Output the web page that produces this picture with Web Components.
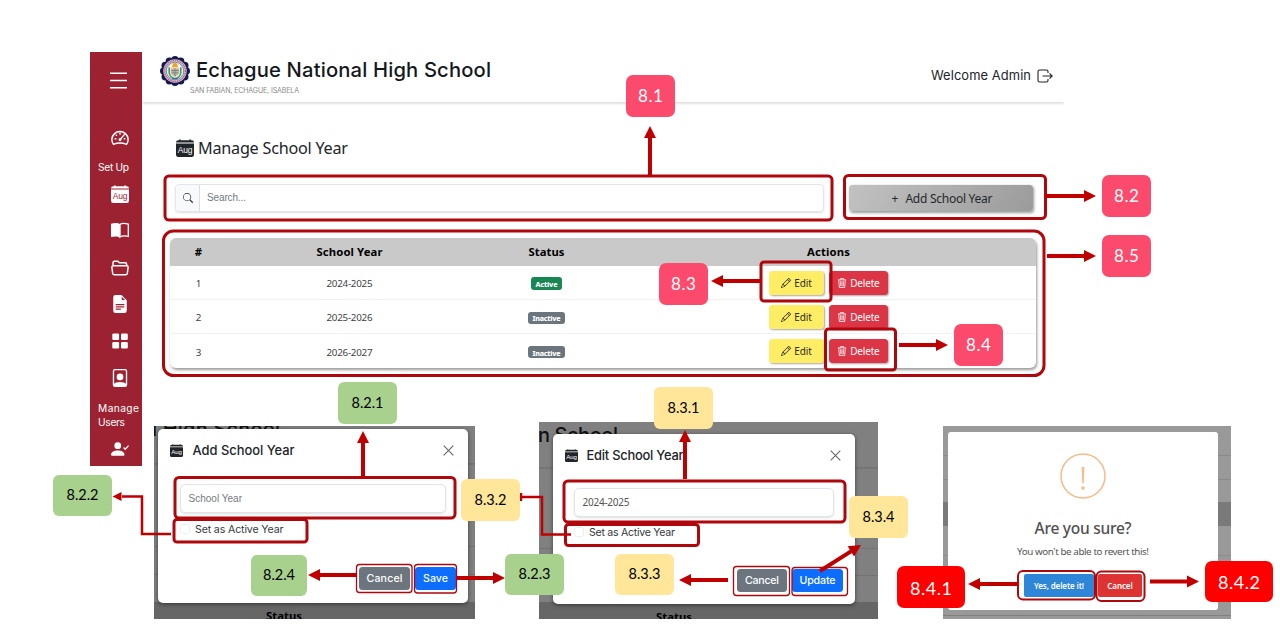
<!DOCTYPE html>
<html lang="en">
<head>
<meta charset="utf-8">
<title>Manage School Year</title>
<style>
html,body{margin:0;padding:0;background:#fff;overflow:hidden}
body{width:1280px;height:644px;font-family:"Noto Sans","Open Sans",sans-serif}
</style>
</head>
<body>
<guide-board></guide-board>
<script>
const make=(name,html,setup)=>customElements.define(name,class extends HTMLElement{
  connectedCallback(){
    if(this.shadowRoot)return;
    this.attachShadow({mode:'open'}).innerHTML=typeof html==='function'?html(this):html;
    if(setup)setup(this);
  }
});
const calendar='<path d="M3.5 0a.5.5 0 0 1 .5.5V1h8V.5a.5.5 0 0 1 1 0V1h1a2 2 0 0 1 2 2H0a2 2 0 0 1 2-2h1V.5a.5.5 0 0 1 .5-.5M0 4h16v10a2 2 0 0 1-2 2H2a2 2 0 0 1-2-2z"/>';
const icons={
 menu:'<path d="M0 1.2h16M0 8h16M0 14.8h16" fill="none" stroke="currentColor" stroke-width="1.5"/>',
 gauge:'<path d="M2.2 13.7A7.2 7.2 0 1 1 13.8 13.7Q8 11.3 2.2 13.7Z" fill="none" stroke="currentColor" stroke-width="1.3"/><path d="M8 3v2M3.2 8.7h1.6M11.3 8.7h1.5M4.2 5l1.1 1.1M12.2 4.6 8 9.5" fill="none" stroke="currentColor" stroke-width="1.2"/><circle cx="8" cy="9.6" r="1.3"/>',
 book:'<path d="M8 2.8C6.2 1.4 3 1.5 0 2.5v11.8c3-.9 6.2-.9 8 .4z"/><path d="M8 3c2-1.2 4.5-1 7.4-.2v10.8c-2.9-.6-5.4-.7-7.4.6z" fill="none" stroke="currentColor" stroke-width="1.2"/>',
 folder:'<path d="M1.8 6.2V3.3Q1.8 2 3.1 2h3l1.4 1.4h5.2q1.2 0 1.2 1.3v1.5M2 6h12q1.4 0 1.2 1.5l-.7 5.2Q14.3 14 13 14H3q-1.3 0-1.5-1.3L.8 7.5Q.7 6 2 6Z" fill="none" stroke="currentColor" stroke-width="1.3"/>',
 doc:'<path fill-rule="evenodd" d="M9.3 0H4a2 2 0 0 0-2 2v12a2 2 0 0 0 2 2h8a2 2 0 0 0 2-2V4.7L9.3 0M9.5 3.5v-2l3 3h-2a1 1 0 0 1-1-1M4.5 9a.5.5 0 0 1 0-1h7a.5.5 0 0 1 0 1zM4 10.5a.5.5 0 0 1 .5-.5h7a.5.5 0 0 1 0 1h-7a.5.5 0 0 1-.5-.5m.5 2.5a.5.5 0 0 1 0-1h4a.5.5 0 0 1 0 1z"/>',
 grid:'<rect x=".3" y=".5" width="6.8" height="6.4" rx="1.2"/><rect x="9" y=".5" width="6.8" height="6.4" rx="1.2"/><rect x=".3" y="9" width="6.8" height="6.4" rx="1.2"/><rect x="9" y="9" width="6.8" height="6.4" rx="1.2"/>',
 portrait:'<rect x="2.2" y=".6" width="11.6" height="14.8" rx="1.4" fill="none" stroke="currentColor" stroke-width="1.2"/><circle cx="8" cy="7" r="3"/><path d="M2.5 15v-1.6C4 11 12 11 13.500 13.400V15z"/>',
 usercheck:'<circle cx="6" cy="5" r="3"/><path d="M0 13.200C0 8 12 8 12 13.200Q12 14 11 14H1Q0 14 0 13.200"/><path d="m11.200 6.700 1.400 1.500L15.600 5" fill="none" stroke="currentColor" stroke-width="1.100"/>',
 search:'<path d="M11.742 10.344a6.500 6.500 0 1 0-1.397 1.398l3.850 3.850a1 1 0 0 0 1.415-1.414zM12 6.500a5.500 5.500 0 1 1-11 0 5.500 5.500 0 0 1 11 0"/>',
 exit:'<path d="M11 5V3.500Q11 2 9.500 2h-7Q1 2 1 3.500v9Q1 14 2.500 14h7Q11 14 11 12.500V11M5.500 8h9.700M12.500 5.300 15.200 8l-2.700 2.700" fill="none" stroke="currentColor" stroke-width="1.100"/>',
 pencil:'<path d="M12.146.146a.5.5 0 0 1 .708 0l3 3a.5.5 0 0 1 0 .708l-10 10a.5.5 0 0 1-.168.110l-5 2a.5.5 0 0 1-.650-.650l2-5a.5.5 0 0 1 .110-.168zM11.207 2.500 13.500 4.793 14.793 3.500 12.500 1.207zm1.586 3L10.500 3.207 4 9.707V10h.5a.5.5 0 0 1 .5.5v.5h.5a.5.5 0 0 1 .5.5v.5h.293zm-9.761 5.175-.106.106-1.528 3.821 3.821-1.528.106-.106A.5.5 0 0 1 5 12.500V12h-.5a.5.5 0 0 1-.5-.5V11h-.5a.5.5 0 0 1-.468-.325"/>',
 trash:'<path d="M1.500 3h13M5.500 2.800V1h5v1.800M2.800 3.200l.9 12h8.600l.9-12M5.700 5.200l.3 8M8 5.200v8M10.300 5.200l-.3 8" fill="none" stroke="currentColor" stroke-width="1.300"/>',
 close:'<path d="m1 1 14 14M15 1 1 15" fill="none" stroke="currentColor" stroke-width="1.600"/>',
};
const seal=()=>{let p='';for(let i=0;i<12;i++){const a=i*Math.PI/6;p+=`<circle cx="${(16+12*Math.cos(a)).toFixed(2)}" cy="${(16+12*Math.sin(a)).toFixed(2)}" r="4"/>`}
 return `<g fill="#15194f">${p}<circle cx="16" cy="16" r="13.600"/></g><circle cx="16" cy="16" r="12.500" fill="#d5c0d2"/><circle cx="16" cy="16" r="11.100" fill="none" stroke="#b66178" stroke-width="1.500" stroke-dasharray="1.200 .8"/><circle cx="16" cy="16" r="9.300" fill="#f3f5e5" stroke="#4b72a7" stroke-width=".8"/><path d="M9.800 12v6q1 5 6.200 6.300 5.200-1.300 6.200-6.300v-6" fill="none" stroke="#36a06a" stroke-width="1.700"/><path d="M11.500 13h9v5q-1 3-4.500 4-3.500-1-4.500-4z" fill="#e9a5a8"/><path d="M12 15.500h8M12.500 18h7M16 13v9" stroke="#4c9b75" stroke-width="1"/><path d="M12.500 12q0-3 3.500-5.500 3.500 2.500 3.500 5.500z" fill="#e8a72c"/><path d="M13 24h6" stroke="#4260a0"/>`};
icons.seal=seal();

make('ui-icon',h=>{
 const n=h.getAttribute('name'),s=h.getAttribute('size')||16;
 if(n==='calendar')return `<style>:host{display:inline-block;flex:none;width:${s}px;height:${s}px;position:relative;line-height:0}b{position:absolute;inset:${s*.27}px 0 0;display:flex;align-items:center;justify-content:center;font:500 ${s*.47}px/1 "Liberation Sans",sans-serif;letter-spacing:-.2px;color:var(--page,#fff)}</style><svg width="${s}" height="${s}" viewBox="0 0 16 16" fill="currentColor">${calendar}</svg><b>Aug</b>`;
 return `<style>:host{display:inline-block;flex:none;line-height:0}</style><svg width="${s}" height="${s}" viewBox="${n==='seal'?'0 0 32 32':'0 0 16 16'}" fill="currentColor">${icons[n]}</svg>`});

make('side-bar',`<style>
:host{display:flex;flex-direction:column;width:52px;height:414px;background:#9c2232;color:#fff;--page:#9c2232;box-sizing:border-box;font-family:Inter,sans-serif}
ui-icon{height:20px;display:flex;align-items:center;justify-content:center;margin-left:8px}
ui-icon[name=calendar]{height:18px;width:18px;margin:9px 0 1px 21px}
ui-icon[name=menu]{height:56px;margin-left:4px;margin-bottom:20px}
.l{font-size:10.200px;line-height:14px;padding-left:8px}
</style><ui-icon name="menu" size="17"></ui-icon><ui-icon name="gauge" size="18"></ui-icon>
<div class="l" style="margin-top:12px;margin-bottom:2px;height:14px"><fit-text w="31">Set Up</fit-text></div>
<ui-icon name="calendar" size="18"></ui-icon>
<ui-icon name="book" size="18" style="margin-top:16px"></ui-icon><ui-icon name="folder" size="18" style="margin-top:18px"></ui-icon>
<ui-icon name="doc" size="18" style="margin-top:16px"></ui-icon><ui-icon name="grid" size="16" style="margin-top:17px"></ui-icon>
<ui-icon name="portrait" size="18" style="margin-top:17px"></ui-icon>
<div class="l" style="margin-top:13px;margin-bottom:-1px"><fit-text w="41">Manage</fit-text><br><fit-text w="27">Users</fit-text></div>
<ui-icon name="usercheck" size="18" style="margin-top:11px"></ui-icon>`);

make('page-header',`<style>
:host{display:flex;height:50px;box-sizing:border-box;box-shadow:0 1px 3px rgba(0,0,0,.2);clip-path:inset(0 0 -5px 0);padding:0 11px 0 18px;font-family:Inter,sans-serif;color:#212529;justify-content:space-between;align-items:flex-start}
.brand{display:flex;gap:6px;padding-top:4px;align-items:flex-start}
.t{font-size:20.200px;line-height:28px;font-weight:500;color:#14181c;height:30px}
.s{margin-left:-6px;font-size:7px;line-height:10px;color:#8a8a8a}
.w{display:flex;align-items:center;gap:6px;font-size:12.900px;height:47px}
</style><div class="brand"><ui-icon name="seal" size="30"></ui-icon><div><div class="t"><fit-text w="295">Echague National High School</fit-text></div><div class="s"><fit-text w="109">SAN FABIAN, ECHAGUE, ISABELA</fit-text></div></div></div>
<div class="w"><fit-text w="100">Welcome Admin</fit-text><ui-icon name="exit" size="16"></ui-icon></div>`);

make('search-bar',`<style>
:host{display:flex;width:649px;height:28px;border:1px solid #e3e5ee;border-radius:4px;box-sizing:border-box;box-shadow:0 1px 2px rgba(0,0,0,.13);overflow:hidden;font:10px/26px "Liberation Sans",sans-serif;color:#727b84}
.i{width:23px;background:#f8f9fa;border-right:1px solid #dadde8;display:flex;align-items:center;justify-content:center;color:#333}
.v{padding-left:7px}
</style><div class="i"><ui-icon name="search" size="10"></ui-icon></div><div class="v"><fit-text w="39">Search...</fit-text></div>`);

make('ui-button',h=>`<style>
:host{display:inline-flex;align-items:center;justify-content:center;flex:none;box-sizing:border-box;border-radius:3.500px;white-space:nowrap;gap:3px}
:host([kind=add]){width:184px;height:26px;background:linear-gradient(125deg,#c2c2c2,#9b9b9b);box-shadow:1px 1.500px 3px rgba(0,0,0,.4);font-size:12px;gap:7px;color:#25282b;padding-left:2px}
:host([kind=edit]){width:55px;height:24px;background:#ffed65;color:#292b1c;font-size:10px;box-shadow:1px 1px 2px rgba(0,0,0,.35)}
:host([kind=delete]){width:59px;height:24px;background:#dc3545;color:#fff;font-size:10px;box-shadow:1px 1px 2px rgba(0,0,0,.35)}
:host([kind=grey]){background:#6c757d}:host([kind=blue]){background:#0d6efd}
:host([kind=grey]),:host([kind=blue]){height:23px;color:#fff;font:500 10.600px Inter,sans-serif;padding-bottom:1px}
:host([kind=yes]){width:70px;height:23px;background:#2e86d9;border-radius:2px}
:host([kind=no]){width:44px;height:23px;background:#dd3333;border-radius:2px}
:host([kind=yes]),:host([kind=no]){color:#fff;font-size:8px;font-weight:600}
:host([kind=yes]),:host([kind=no]){padding-bottom:1px}
</style><slot></slot>`);

make('status-badge',`<style>:host{display:flex;box-sizing:border-box;width:37px;height:12px;border-radius:3px;align-items:center;justify-content:center;background:#6c757d;color:#fff;font-size:7.200px;font-weight:800;line-height:12px;padding-top:1px}
:host([on]){background:#198754;width:31px;height:13px}</style><slot></slot>`);

make('year-table',()=>{
 const rows=[['1','2024-2025',1],['2','2025-2026',0],['3','2026-2027',0]];
 return `<style>:host{display:block;width:866px;border-radius:6px;overflow:hidden;box-shadow:1px 2px 3px rgba(0,0,0,.4);background:#fff;color:#3d4144;font-size:9.800px}
.r{display:grid;grid-template-columns:57px 245px 149px 415px;height:34px;align-items:center;justify-items:center;border-bottom:1px solid #f0f1f2;box-sizing:border-box}
.r:last-child{border:0;height:34px}.h{background:#c9c9c9;height:28px;color:#000;font-weight:700;font-size:11.300px;border:0;padding-bottom:1px}
.n{padding-top:2px}
.a{display:flex;gap:5px}status-badge{margin-top:2px}</style>
<div class="r h"><span>#</span><fit-text w="66">School Year</fit-text><fit-text w="36">Status</fit-text><fit-text w="43">Actions</fit-text></div>`+
 rows.map(r=>`<div class="r"><span class="n">${r[0]}</span><span class="n"><fit-text w="46">${r[1]}</fit-text></span>${r[2]?'<status-badge on><fit-text w="22">Active</fit-text></status-badge>':'<status-badge><fit-text w="28">Inactive</fit-text></status-badge>'}<div class="a"><ui-button kind="edit"><ui-icon name="pencil" size="10"></ui-icon><fit-text w="17.500">Edit</fit-text></ui-button><ui-button kind="delete"><ui-icon name="trash" size="10"></ui-icon><fit-text w="29.500">Delete</fit-text></ui-button></div></div>`).join('')});

make('school-app',`<style>:host{display:grid;grid-template-columns:52px 922px;width:974px;height:414px;background:#fff}
h1{margin:33px 0 0 34px;display:flex;align-items:center;gap:4px;font-size:16.200px;font-weight:400;line-height:26px;height:26px;color:#212529}
.bar{display:flex;justify-content:space-between;margin:23px 31px 0 33px;height:28px;align-items:center}
year-table{margin:26px 0 0 28px}</style><side-bar></side-bar><main><page-header></page-header><h1><ui-icon name="calendar" size="18"></ui-icon><fit-text w="150">Manage School Year</fit-text></h1>
<div class="bar"><search-bar></search-bar><ui-button kind="add"><span>+</span><fit-text w="87">Add School Year</fit-text></ui-button></div><year-table></year-table></main>`);

make('year-dialog',h=>{
 const e=h.hasAttribute('edit');
 return `<style>:host{display:block;position:relative;overflow:hidden;box-sizing:border-box;width:${e?339:321}px;height:${e?197:193}px;padding:${e?'12px 23px 15px 14px':'3px 7px 16px 4px'};background:linear-gradient(transparent ${e?45:37}px,#737373 ${e?45:37}px,#777 ${e?47:39}px,transparent ${e?47:39}px,transparent ${e?126:120}px,#737373 ${e?126:120}px,#737373 ${e?127:121}px,transparent ${e?127:121}px,transparent ${e?153:148}px,#737373 ${e?153:148}px,#737373 ${e?154:149}px,transparent ${e?154:149}px,transparent ${e?180:176}px,#666 ${e?180:176}px),#808080;color:#212529;font-family:Inter,sans-serif}
.box{position:relative;display:flex;flex-direction:column;height:100%;box-sizing:border-box;background:#fff;border-radius:5px;box-shadow:0 1px 4px rgba(0,0,0,.5);padding:0 12px}
.under{position:absolute;font-size:20px;line-height:24px;color:#111;font-weight:500;white-space:nowrap}
.st{position:absolute;font:700 11.300px/16px "Noto Sans",sans-serif;color:#000}
.head{display:flex;align-items:center;height:42px;font-size:12.900px;font-weight:500;gap:${e?8.500:9.500}px}.head ui-icon[name=close]{margin-left:auto;color:#666}
.in{height:29px;margin-right:${e?9:10}px;margin-left:${e?9:10}px;box-sizing:border-box;border:1px solid #e0e3e8;border-radius:5px;box-shadow:0 1px 2px rgba(0,0,0,.13);padding-left:7.500px;font:10px/27px "${e?'Noto Sans':'Liberation Sans'}",sans-serif;color:${e?'#555':'#747b82'}}
.ck{display:flex;align-items:center;gap:5px;margin-left:${e?9:10}px;height:14px;font-size:10.600px;color:#343a40;margin-top:${e?8:9}px}.ck i{width:10px;height:10px;box-sizing:border-box;border:1px solid #eeeef0;border-radius:2.500px}
.f{display:flex;justify-content:flex-end;gap:5px;margin-top:${e?30:31}px}</style>
<div class="under" style="left:${e?-1:-2}px;top:${e?1:-9}px"><fit-text w="${e?80:128}">${e?'n School':'l High School'}</fit-text></div>
<div class="st" style="left:112px;top:${e?187:182}px;${e?'margin-left:5px':''}"><fit-text w="36">Status</fit-text></div>
<div class="box"><div class="head"><ui-icon name="calendar" size="13"></ui-icon><fit-text w="${e?97:102}">${e?'Edit School Year':'Add School Year'}</fit-text><ui-icon name="close" size="11" style="margin-right:2px"></ui-icon></div>
<div class="in" style="margin-top:${e?12:13}px"><fit-text w="${e?47:53.500}">${e?'2024-2025':'School Year'}</fit-text></div>
<div class="ck"><i></i><fit-text w="${e?86:88.500}">Set as Active Year</fit-text></div>
<div class="f"><ui-button kind="grey" style="width:${e?50:51}px"><fit-text w="${e?34:36}">Cancel</fit-text></ui-button><ui-button kind="blue" style="width:${e?51:41}px"><fit-text w="${e?36:25}">${e?'Update':'Save'}</fit-text></ui-button></div></div>`});

make('confirm-dialog',`<style>:host{display:block;width:288px;height:193px;box-sizing:border-box;padding:6px 13px 9px 5px;background:linear-gradient(transparent 29px,#8a8a8a 29px 30px,transparent 30px 53px,#8a8a8a 53px 54px,transparent 54px 76px,#7a7a7a 76px 100px,transparent 100px 129px,#8c8c8c 129px 130px,transparent 130px 189px,#808080 189px 190px,transparent 190px),#999}
.box{display:flex;flex-direction:column;align-items:center;height:100%;background:#fff;border-radius:3px;color:#545454}
svg{margin-top:21px;flex:none}.t{font-size:15.500px;font-weight:500;line-height:24px;margin-top:17px;color:#505050}.s{font-size:9.800px;line-height:16px;margin-top:4px}.f{display:flex;gap:4px;margin-top:14px}</style>
<div class="box"><svg width="46" height="46" viewBox="0 0 46 46" fill="none" stroke="#f8bb86"><circle cx="23" cy="23" r="22" stroke-width="1.500"/><path d="M21.600 14h2.800l-.7 16.500h-1.400z" fill="#f8bb86" stroke="none"/><circle cx="23" cy="35" r="1.800" fill="#f8bb86" stroke="none"/></svg>
<div class="t"><fit-text w="97">Are you sure?</fit-text></div><div class="s"><fit-text w="132">You won't be able to revert this!</fit-text></div>
<div class="f"><ui-button kind="yes"><fit-text w="50">Yes, delete it!</fit-text></ui-button><ui-button kind="no"><fit-text w="25.500">Cancel</fit-text></ui-button></div></div>`);

make('note-tag',`<style>:host{position:absolute;display:flex;align-items:center;justify-content:center;box-sizing:border-box;border-radius:6px;width:59px;height:41.500px;background:#a9d18e;color:#000;font:14.500px/1 Lato,sans-serif;padding-bottom:0}
:host([c=pink]){width:49px;background:#fb4a6b;color:#fff;font-size:17px;border-radius:7px}
:host([c=yellow]){background:#ffe699}
:host([c=red]){width:68px;background:#f00;color:#fff;font-size:18px;border-radius:7px;padding:2px 0 0}</style><slot></slot>`);

make('callout-layer',()=>{
 const boxes=[[164.500,175.500,667,44,3,4],[844,175,201,43,3,4],[163,230.500,880.500,144.500,3,10],[760.500,261.500,70,39,3,3],[825,328.500,70,41,3,3],
 [174.500,477,280,40.500,3,4],[173.500,519,133,22.500,3,3],[356,564,55.500,28,1.300,3],[414,564,42,28.500,1.300,3],
 [563.500,480.500,281,41,3,4],[565,524,133,21,3,3],[733,566,56,29,1.300,3],[791.500,567,55.500,28,1.300,3],
 [1017.500,570.500,77,28.500,2,5],[1096,571,48,29.500,2,5]];
 const arrow=(x1,y1,x2,y2,w=4,L=12,W=12)=>{const a=Math.atan2(y2-y1,x2-x1),c=Math.cos(a),s=Math.sin(a),bx=x2-L*c,by=y2-L*s;
  return `<path d="M${x1} ${y1}L${bx+c} ${by+s}" stroke-width="${w}"/><path d="M${x2} ${y2}L${bx-s*W/2} ${by+c*W/2}L${bx+s*W/2} ${by-c*W/2}Z" fill="#c00000" stroke="none"/>`};
 return `<style>:host{position:absolute;inset:0;pointer-events:none}svg{display:block}</style><svg width="1280" height="644" fill="none" stroke="#c00000">`+
 boxes.map(b=>`<rect x="${b[0]+.5}" y="${b[1]+.5}" width="${b[2]}" height="${b[3]}" rx="${b[5]}" stroke="#af070c" stroke-width="${b[4]}"/>`).join('')+
 arrow(650,176,650,126)+arrow(1046,196,1096,196)+arrow(1047,256,1096,256)+arrow(761,281,711,281)+arrow(899,345,948,345)+
 arrow(363,479,363,431)+arrow(357,575,308,575)+arrow(457,578,505,578)+arrow(685,479,685,430)+arrow(728,580,679,580)+arrow(820,571,861,545)+
 arrow(1018,584,968,584)+arrow(1150,581.500,1199,581.500)+
 '<path d="M171 534H142V496.500H122" stroke-width="2.500"/><path d="M112.500 496.500l9-4.500v9z" fill="#c00000" stroke="none"/>'+
 '<path d="M571 534.500H542V497H520M521 493v8" stroke-width="2.500"/></svg>'});

make('guide-board',()=>{
 const tags=[['8.1',626,75,'pink'],['8.2',1102,175,'pink'],['8.5',1102,235,'pink'],['8.3',659,263,'pink'],['8.4',954,324,'pink'],
 ['8.2.1',338,382,'green'],['8.2.2',53,474.500,'green'],['8.2.4',251,554.500,'green',56],['8.2.3',505,553.500,'green'],
 ['8.3.1',654,387,'yellow'],['8.3.2',461,479,'yellow'],['8.3.3',615,553.500,'yellow'],['8.3.4',849,496,'yellow'],['8.4.1',897,566,'red'],['8.4.2',1205,560.500,'red']];
 return `<style>:host{display:block;position:relative;width:1280px;height:644px;overflow:hidden;background:#fff}
 school-app,year-dialog,confirm-dialog{position:absolute}</style>
 <school-app style="left:90px;top:52px"></school-app>
 <year-dialog style="left:154px;top:426px"></year-dialog><year-dialog edit style="left:539px;top:422px"></year-dialog>
 <confirm-dialog style="left:943px;top:426px"></confirm-dialog><callout-layer></callout-layer>`+
 tags.map(t=>`<note-tag c="${t[3]}" style="left:${t[1]}px;top:${t[2]}px${t[4]?';width:'+t[4]+'px':''}"><fit-text w="${t[3]==='pink'?25:t[3]==='red'?42:32}">${t[0]}</fit-text></note-tag>`).join('')});

/* Spreads its text over the width given in w by adjusting the tracking. */
make('fit-text','<style>:host{display:inline-block;white-space:nowrap}</style><slot></slot>',h=>{
 const w=+h.getAttribute('w'),n=h.textContent.length,now=h.getBoundingClientRect().width;
 const ls=(w-now)/(n-1);
 h.style.letterSpacing=ls.toFixed(3)+'px';h.style.marginRight=(-ls).toFixed(3)+'px';
});
</script>
</body>
</html>
